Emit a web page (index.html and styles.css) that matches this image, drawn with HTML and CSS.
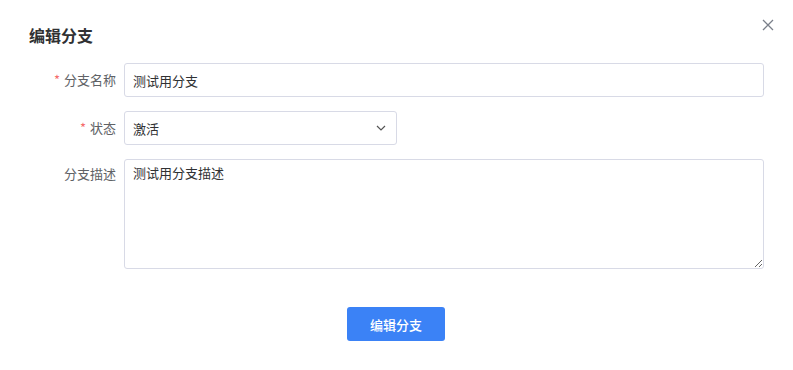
FILE: index.html
```html
<!DOCTYPE html>
<html lang="zh-CN">
<head>
    <meta charset="UTF-8">
    <meta name="viewport" content="width=device-width, initial-scale=1.0">
    <title>编辑分支</title>
    <link rel="stylesheet" href="styles.css">
</head>
<body>
    <div class="dialog">
        <div class="dialog-header">
            <h1>编辑分支</h1>
            <span class="close">
                <svg width="12" height="12" viewBox="0 0 12 12"><path d="M1 1L11 11M11 1L1 11" stroke="#7a7f8a" stroke-width="1.3" fill="none"/></svg>
            </span>
        </div>
        <form class="form">
            <div class="row">
                <label class="label required" for="name">分支名称</label>
                <input class="field" type="text" id="name" value="测试用分支">
            </div>
            <div class="row">
                <label class="label required" for="status">状态</label>
                <div class="select">
                    <span>激活</span>
                    <svg width="10" height="6" viewBox="0 0 10 6"><path d="M1 1L5 5L9 1" stroke="#555" stroke-width="1.2" fill="none"/></svg>
                </div>
            </div>
            <div class="row top">
                <label class="label" for="desc">分支描述</label>
                <textarea class="field area" id="desc">测试用分支描述</textarea>
            </div>
            <div class="actions">
                <button type="button">编辑分支</button>
            </div>
        </form>
    </div>
</body>
</html>
```

FILE: styles.css
```css
*{
    margin: 0;
    padding: 0;
    box-sizing: border-box;
    font-family: "Noto Sans CJK SC", "Noto Sans", sans-serif;
}
body{
    background: #fff;
    width: 793px;
    height: 370px;
}
.dialog{
    padding: 18px 29px 0 24px;
}
.dialog-header{
    display: flex;
    justify-content: space-between;
    align-items: flex-start;
    padding-left: 5px;
    height: 45px;
}
.dialog-header h1{
    font-size: 16px;
    font-weight: 700;
    color: #303133;
    line-height: 34px;
}
.close{
    margin-top: 1px;
    margin-right: -10px;
    display: flex;
}
.form{
    display: flex;
    flex-direction: column;
    gap: 14px;
}
.row{
    display: flex;
    align-items: center;
    gap: 8px;
}
.row.top{
    align-items: flex-start;
}
.label{
    width: 92px;
    text-align: right;
    font-size: 13px;
    color: #606266;
    line-height: 32px;
}
.row.top .label{
    line-height: 30px;
}
.required::before{
    content: "*";
    color: #f56c6c;
    margin-right: 4px;
}
.field{
    flex: 1;
    height: 34px;
    border: 1px solid #d8dae6;
    border-radius: 3px;
    padding: 0 8px;
    font-size: 13px;
    color: #303133;
    outline: none;
}
.area{
    height: 110px;
    padding: 2px 8px;
    line-height: 22px;
    resize: vertical;
}
.select{
    width: 273px;
    height: 34px;
    border: 1px solid #d8dae6;
    border-radius: 3px;
    padding: 0 10px 0 8px;
    font-size: 13px;
    color: #303133;
    display: flex;
    align-items: center;
    justify-content: space-between;
}
.actions{
    display: flex;
    justify-content: center;
    padding-top: 24px;
    padding-left: 4px;
}
.actions button{
    width: 98px;
    height: 34px;
    border: none;
    border-radius: 3px;
    background: #3b82f6;
    color: #fff;
    font-size: 13px;
    font-weight: 500;
}
```
